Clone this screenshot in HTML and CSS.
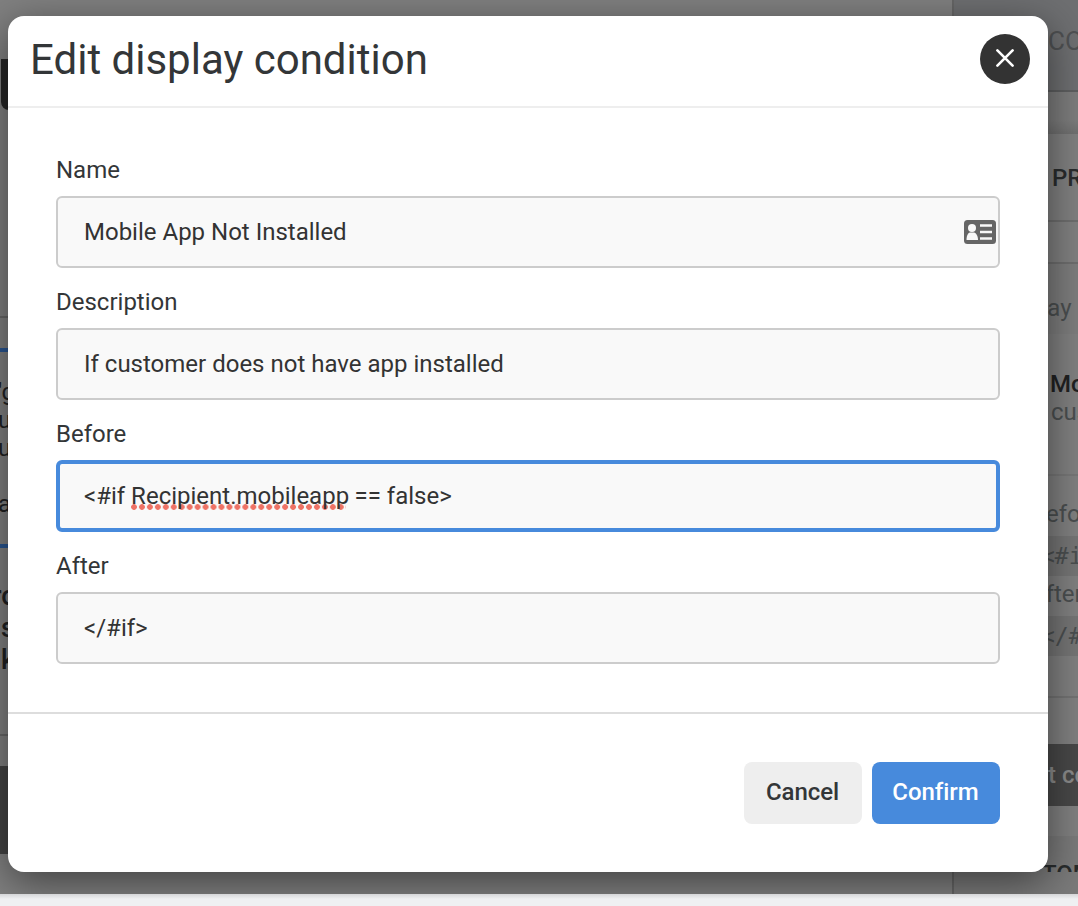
FILE: index.html
```html
<!DOCTYPE html>
<html lang="en">
<head>
<meta charset="utf-8">
<title>Edit display condition</title>
<link rel="stylesheet" href="styles.css">
</head>
<body>
<div class="app">
  <main class="canvas">
    <div class="dark-tab"></div>
    <div class="rule rule-first"></div>
    <section class="selected">
      <p>'g</p><p>u</p><p>u</p><p class="gap">a</p>
    </section>
    <section class="copy"><p>ro</p><p class="shift">s</p><p class="shift">k</p></section>
    <div class="rule"></div>
    <div class="dark-block"></div>
  </main>
  <aside class="side">
    <div class="tabs">CONTENT</div>
    <div class="spacer"></div>
    <div class="properties">PROPERTIES</div>
    <div class="spacer-small"></div>
    <div class="heading">Display</div>
    <div class="summary"><b>Mobile</b><span>customer</span></div>
    <div class="code-group">
      <div class="label">Before</div>
      <div class="code">&lt;#if</div>
      <div class="label label-after">After</div>
      <div class="code">&lt;/#if&gt;</div>
    </div>
    <div class="action-wrap"><div class="action"><span>Edit condition</span></div></div>
    <div class="custom"><div class="custom-clip">CUSTOM</div></div>
  </aside>
</div>
<div class="bottom-strip"></div>

<div class="modal" role="dialog">
  <header class="modal-header">
    <h1>Edit display condition</h1>
    <button class="close" aria-label="Close">
      <svg width="18" height="18" viewBox="0 0 18 18"><path d="M1.400 1.400 16.600 16.600M16.600 1.400 1.400 16.600" fill="none" stroke="#fff" stroke-width="2.600" stroke-linecap="round"/></svg>
    </button>
  </header>
  <div class="modal-body">
    <div class="field">
      <label>Name</label>
      <div class="input with-icon"><span>Mobile App Not Installed</span>
        <svg width="32" height="24" viewBox="0 0 32 24"><rect width="32" height="24" rx="3.5" fill="#666"/><circle cx="8" cy="8" r="4" fill="#f9f9f9"/><path d="M2.500 20c0-4 1.300-7 3.500-7.500h4c2.200.5 4 3.500 4 7.500z" fill="#f9f9f9"/><path d="M16 5.500h12M16 12h12M16 18.500h12" stroke="#f9f9f9" stroke-width="2.600"/></svg>
      </div>
    </div>
    <div class="field">
      <label>Description</label>
      <div class="input"><span>If customer does not have app installed</span></div>
    </div>
    <div class="field">
      <label>Before</label>
      <div class="input focused"><span>&lt;#if <span class="misspelled">Recipient.mobileapp</span> == false&gt;</span></div>
    </div>
    <div class="field">
      <label>After</label>
      <div class="input"><span>&lt;/#if&gt;</span></div>
    </div>
  </div>
  <footer class="modal-footer">
    <button class="btn cancel">Cancel</button>
    <button class="btn confirm">Confirm</button>
  </footer>
</div>
</body>
</html>
```

FILE: styles.css
```css
* { box-sizing: border-box; }
body { margin: 0; width: 1078px; height: 906px; overflow: hidden; position: relative; background: #eff0f2; color: #333638; font-family: Roboto, sans-serif; font-size: 24px; }
p, h1 { margin: 0; }
button { border: 0; padding: 0; font: inherit; color: inherit; }
.app { display: grid; grid-template-columns: 952px 126px; height: 894px; background: #808080; overflow: hidden; white-space: nowrap; }
.bottom-strip { position: relative; z-index: 2; height: 12px; background: linear-gradient(#d5d6d8, #eff0f2 5px); }

.canvas { overflow: hidden; color: #202122; }
.dark-tab { width: 60px; height: 51px; margin: 59px 0 0 1px; background: #272727; border-radius: 0 0 0 8px; }
.rule { height: 2px; background: #686868; }
.rule-first { margin-top: 206px; }
.selected { margin-top: 30px; height: 200px; padding-top: 26px; border: 4px solid #2a5692; border-width: 4px 0; line-height: 28px; }
.selected p { margin-left: -2px; }
.selected .gap { margin-top: 28px; }
.copy { height: 186px; padding-top: 32px; line-height: 32px; font-size: 27px; font-weight: 500; }
.copy p { margin-left: -8px; }
.copy .shift { margin-left: 1px; }
.dark-block { height: 88px; margin-top: 30px; background: #444; }

.side { border-left: 2px solid #666; overflow: hidden; color: #4b4f50; }
.tabs { height: 92px; padding-left: 94px; line-height: 82px; font-size: 26px; color: #4f5153; background: #6e6f71; border-bottom: 2px solid #5e5f60; }
.spacer { height: 42px; background: linear-gradient(#7d7d7d 28px, #707070); }
.properties { height: 88px; padding-left: 98px; line-height: 88px; font-weight: 500; color: #292c2d; border-bottom: 2px solid #6e6e6e; }
.spacer-small { height: 42px; border-bottom: 2px solid #6e6e6e; }
.heading { height: 70px; padding-left: 40px; line-height: 88px; background: #7d7d7d; }
.summary { height: 142px; padding: 36px 0 0 97px; line-height: 28px; border-bottom: 2px solid #777; }
.summary b, .summary span { display: block; }
.summary b { margin-left: -1px; font-weight: 500; color: #202122; }
.code-group { height: 222px; padding-top: 18px; border-bottom: 2px solid #737373; }
.label { height: 42px; padding-left: 77px; line-height: 40px; }
.label-after { height: 40px; padding-left: 76px; line-height: 36px; }
.code { height: 40px; padding-left: 87px; line-height: 40px; font-family: "DejaVu Sans Mono", monospace; font-size: 23px; background: #757575; }
.action-wrap { height: 138px; padding-top: 46px; }
.action { height: 62px; padding-left: 61px; line-height: 62px; font-weight: 500; color: #8b8b8b; background: #484848; }
.custom { height: 58px; background: #7a7a7a; }
.custom-clip { height: 36px; padding: 24px 0 0 42px; overflow: hidden; font-weight: 500; color: #292c2d; }

.modal { position: absolute; left: 8px; top: 16px; width: 1040px; height: 856px; display: flex; flex-direction: column; background: #fff; border-radius: 16px; box-shadow: 0 10px 40px rgba(0,0,0,.5); }
.modal-header { height: 92px; padding: 0 18px 9px 22px; display: flex; align-items: center; justify-content: space-between; border-bottom: 2px solid #eee; }
h1 { font-size: 42px; font-weight: 400; padding-top: 5px; }
.close { width: 50px; height: 50px; padding-bottom: 2px; display: flex; align-items: center; justify-content: center; border-radius: 50%; margin-top: 4px; background: #333; }
.modal-body { flex: 1; padding: 42px 48px 0; display: flex; flex-direction: column; gap: 14px; }
.field { height: 118px; }
.field label { display: block; height: 46px; line-height: 40px; }
.input { height: 72px; padding: 0 2px 0 26px; display: flex; align-items: center; justify-content: space-between; border: 2px solid #ccc; border-radius: 6px; background: #f9f9f9; color: #333; white-space: nowrap; }
.focused { border: 4px solid #478adc; padding-left: 24px; }
.misspelled { display: inline-block; line-height: 28px; background: radial-gradient(circle at 3px 3px, #ee7265 2.5px, transparent 3.200px) 0 100% / 7.96px 6px repeat-x; background-clip: content-box; padding-right: 3px; width: 217.500px; }
.modal-footer { height: 160px; padding: 48px; display: flex; justify-content: flex-end; gap: 10px; border-top: 2px solid #ddd; }
.btn { height: 62px; padding-bottom: 2px; border-radius: 8px; font-weight: 500; letter-spacing: -.05px; }
.cancel { width: 118px; padding-right: 1px; background: #eee; }
.confirm { width: 128px; padding-right: 1px; background: #478adc; color: #fff; }
```
